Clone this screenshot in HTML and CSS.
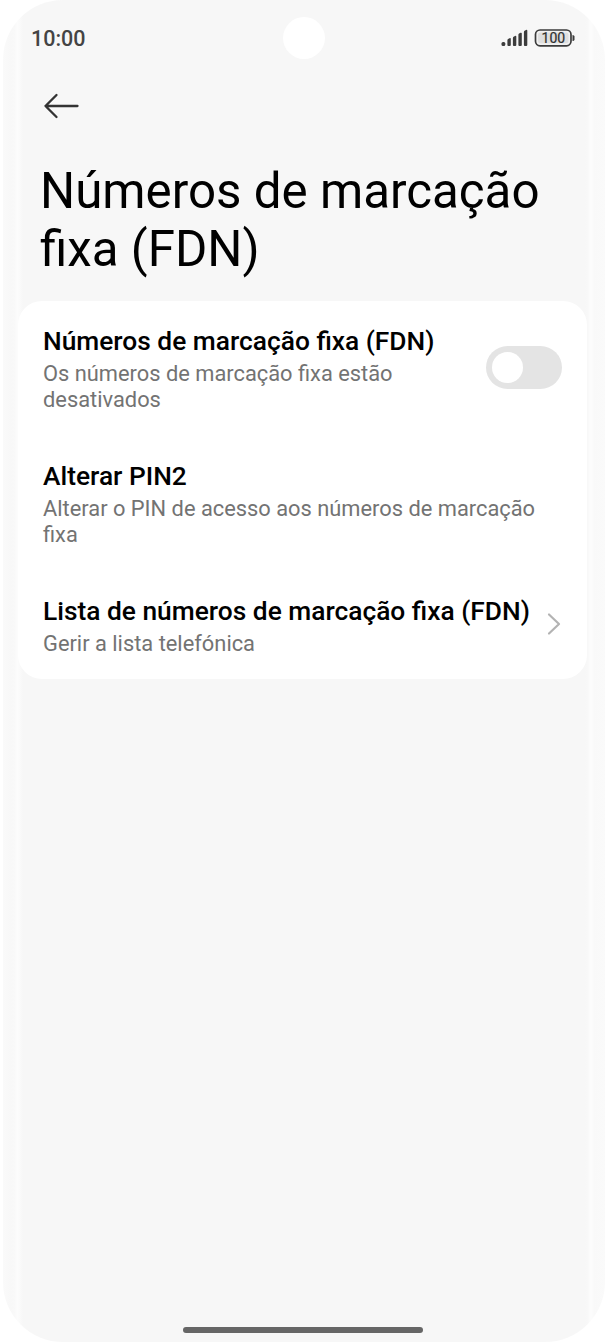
FILE: index.html
```html
<!DOCTYPE html>
<html lang="pt">
<head>
<meta charset="utf-8">
<title>Números de marcação fixa (FDN)</title>
<link rel="stylesheet" href="styles.css">
</head>
<body>
<main class="phone">
  <header class="status">
    <span class="clock">10:00</span>
    <span class="camera"></span>
    <svg class="indicators" width="76" height="22" viewBox="0 0 76 22">
      <g fill="#3c3c3c">
        <rect x="1.5" y="16" width="3.8" height="4" rx="1.5"/>
        <path d="M7.4 14.2q0-.8.7-1.2l1.4-.8q1.3-.5 1.3.8v6q0 1-1 1H8.4q-1 0-1-1z"/>
        <path d="M12.9 12q0-.8.7-1.2l1.4-.8q1.3-.5 1.3.8V19q0 1-1 1h-1.4q-1 0-1-1z"/>
        <path d="M18.4 8.8q0-.8.7-1.2l1.4-.8q1.3-.5 1.3.8V19q0 1-1 1h-1.4q-1 0-1-1z"/>
        <path d="M23.9 6q0-.8.7-1.2l1.4-.8q1.3-.5 1.3.8V19q0 1-1 1h-1.4q-1 0-1-1z"/>
        <path d="M72.5 9q2 0 2 1.5v3q0 1.5-2 1.5z"/>
      </g>
      <rect x="35.5" y="4" width="35.5" height="15.8" rx="4.5" fill="#f1f1f1" stroke="#3c3c3c" stroke-width="1.7"/>
      <rect x="38" y="6.5" width="30.5" height="10.8" rx="2.5" fill="#dfdfdf"/>
      <text class="battery" x="53.4" y="17" text-anchor="middle">100</text>
    </svg>
  </header>
  <svg class="back" width="38" height="28" viewBox="0 0 38 28" fill="none" stroke="#333" stroke-width="2.3" stroke-linecap="round" stroke-linejoin="round"><path d="M34.5 14H2.5M13.5 3L2.5 14l11 11"/></svg>
  <h1 class="title">Números de marcação<br>fixa (FDN)</h1>
  <section class="card">
    <div class="row">
      <div class="copy"><h2>Números de marcação fixa (FDN)</h2><p>Os números de marcação fixa estão<br>desativados</p></div>
      <span class="toggle"></span>
    </div>
    <div class="row">
      <div class="copy"><h2>Alterar PIN2</h2><p>Alterar o PIN de acesso aos números de marcação<br>fixa</p></div>
    </div>
    <div class="row">
      <div class="copy"><h2>Lista de números de marcação fixa (FDN)</h2><p>Gerir a lista telefónica</p></div>
      <svg class="chevron" width="16" height="24" viewBox="0 0 16 24" fill="none" stroke="#b3b3b3" stroke-width="2.2" stroke-linecap="round" stroke-linejoin="round"><path d="M3 2.5l10 9.5L3 21.5"/></svg>
    </div>
  </section>
  <span class="home"></span>
</main>
</body>
</html>
```
FILE: styles.css
```css
* { box-sizing: border-box; }
body { margin: 0; background: #fff; font-family: Roboto, sans-serif; }
.phone {
  display: flex; flex-direction: column;
  width: 602px; height: 1341.5px; margin-left: 3px; padding: 0 15px;
  border-radius: 60px; overflow: hidden;
  background: linear-gradient(90deg, #fafafa 0, #f8f8f8 8px, #f9f9f9 12px, #fcfcfc 14px, #fbfbfb 16px, #f7f7f7 20px, #f7f7f7 582px, #f8f8f8 585px, #fcfcfc 587px, #fcfcfc 589px, #f9f9f9 591px, #fafafa 100%);
}
.status { display: grid; grid-template-columns: 1fr 42px 1fr; align-items: center; height: 76px; padding: 0 13px; }
.clock { padding-top: 1px; font-size: 21.5px; font-weight: 500; line-height: 26px; color: #444; }
.camera { width: 42px; height: 42px; border-radius: 50%; background: #fff; }
.indicators { justify-self: end; margin: -1px 1px 1px 0; }
.battery { font: 400 14px Roboto, sans-serif; fill: #303030; stroke: #303030; stroke-width: .2px; }
.back { margin: 16px 0 0 25px; }
.title { margin: 43px 0 0 22px; font-size: 49.3px; line-height: 57.5px; font-weight: 400; color: #000; white-space: nowrap; }
.card { width: 569px; height: 378px; margin-top: 23px; padding: 23px 25px 0 25px; border-radius: 24px; background: #fff; }
.row { display: flex; justify-content: space-between; align-items: center; margin-bottom: 46.4px; }
.copy { white-space: nowrap; }
h2 { margin: 0; font-size: 26.33px; line-height: 34px; font-weight: 500; color: #000; }
p { margin: 0; padding-top: 3.4px; font-size: 21.85px; line-height: 25.6px; color: #737373; }
.toggle { width: 76px; height: 43px; margin-bottom: 2px; padding: 6px; border-radius: 22px; background: #e4e4e4; }
.toggle::before { content: ""; display: block; width: 31px; height: 31px; border-radius: 50%; background: #fff; }
.chevron { margin-bottom: 2px; }
.home { width: 240px; height: 6px; margin: auto 0 9px 164.5px; border-radius: 3px; background: #666; }
```
